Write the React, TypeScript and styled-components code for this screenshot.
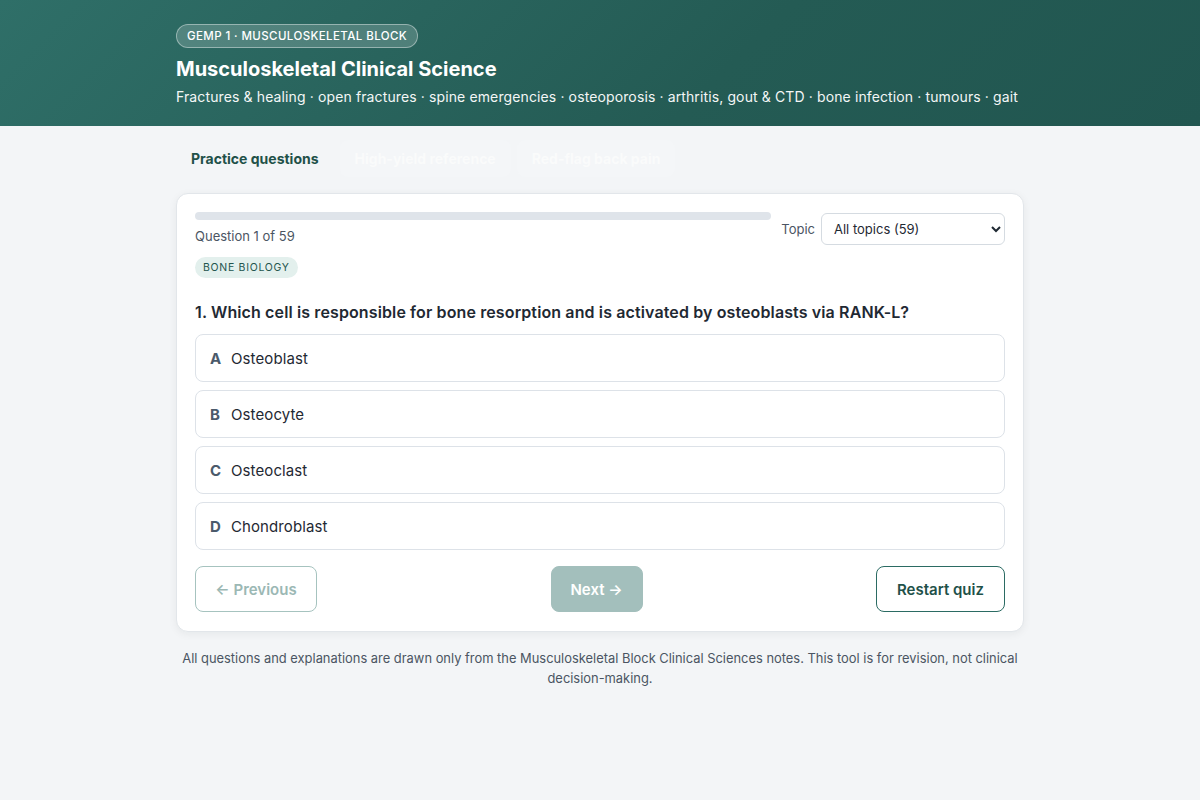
import React, { useState } from "react";
import styled, { createGlobalStyle } from "styled-components";

const questions = [
  {
    topic: "Bone biology",
    text: "Which cell is responsible for bone resorption and is activated by osteoblasts via RANK-L?",
    options: ["Osteoblast", "Osteocyte", "Osteoclast", "Chondroblast"],
  },
];

const tabs = ["Practice questions", "High-yield reference", "Red-flag back pain"];

const App = () => {
  const [tab, setTab] = useState(0);
  const [index] = useState(0);
  const q = questions[index];

  return (
    <>
      <GlobalStyle />
      <Header>
        <Inner>
          <Badge>GEMP 1 · Musculoskeletal Block</Badge>
          <Title>Musculoskeletal Clinical Science</Title>
          <Subtitle>
            Fractures &amp; healing · open fractures · spine emergencies · osteoporosis · arthritis, gout &amp; CTD · bone infection · tumours · gait
          </Subtitle>
        </Inner>
      </Header>
      <Main>
        <Tabs>
          {tabs.map((t, i) => (
            <Tab key={t} active={i === tab} onClick={() => setTab(i)}>{t}</Tab>
          ))}
        </Tabs>
        <Card>
          <TopRow>
            <ProgressCol>
              <Track>
                <Fill style={{ width: `${(index / 59) * 100}%` }} />
              </Track>
              <Counter>Question {index + 1} of 59</Counter>
            </ProgressCol>
            <TopicLabel>
              Topic
              <Select defaultValue="all">
                <option value="all">All topics (59)</option>
              </Select>
            </TopicLabel>
          </TopRow>
          <Tag>{q.topic}</Tag>
          <Question>{index + 1}. {q.text}</Question>
          <Options>
            {q.options.map((o, i) => (
              <Option key={o}>
                <Letter>{"ABCD"[i]}</Letter>
                {o}
              </Option>
            ))}
          </Options>
          <Actions>
            <GhostButton disabled>← Previous</GhostButton>
            <NextButton disabled>Next →</NextButton>
            <OutlineButton>Restart quiz</OutlineButton>
          </Actions>
        </Card>
        <Footnote>
          All questions and explanations are drawn only from the Musculoskeletal Block Clinical Sciences notes. This tool is for revision, not clinical decision-making.
        </Footnote>
      </Main>
    </>
  );
};

export default App;

const GlobalStyle = createGlobalStyle`
  body {
    margin: 0;
    background: #f3f5f7;
    font-family: Inter, "Liberation Sans", sans-serif;
    color: #1f2933;
  }
`;

const Header = styled.header`
  background: linear-gradient(135deg, #2f6f68 0%, #245b54 60%, #215650 100%);
  color: #fff;
  height: 126px;
  box-sizing: border-box;
  padding-top: 24px;
`;

const Inner = styled.div`
  width: 848px;
  margin: 0 auto;
`;

const Badge = styled.span`
  display: inline-block;
  font-size: 11.5px;
  font-weight: 500;
  letter-spacing: 0.4px;
  text-transform: uppercase;
  padding: 4px 10px;
  border-radius: 999px;
  background: rgba(255, 255, 255, 0.18);
  border: 1px solid rgba(255, 255, 255, 0.4);
`;

const Title = styled.h1`
  font-size: 20px;
  font-weight: 700;
  margin: 9px 0 0;
`;

const Subtitle = styled.p`
  font-size: 14px;
  letter-spacing: 0.12px;
  margin: 7px 0 0;
  opacity: 0.95;
`;

const Main = styled.main`
  width: 848px;
  margin: 0 auto;
  padding-top: 14px;
`;

const Tabs = styled.div`
  display: flex;
  gap: 6px;
  margin-bottom: 16px;
`;

const Tab = styled.button<{ active: boolean }>`
  border: none;
  background: ${(p) => (p.active ? "transparent" : "#f4f6f8")};
  color: ${(p) => (p.active ? "#1f5149" : "#fafbfb")};
  font: inherit;
  font-size: 14px;
  font-weight: 700;
  padding: 10px 15px;
  border-radius: 8px;
  cursor: pointer;
`;

const Card = styled.section`
  background: #fff;
  border: 1px solid #e2e6ea;
  border-radius: 12px;
  box-shadow: 0 2px 8px rgba(15, 30, 40, 0.06);
  padding: 18px 18px 19px;
`;

const TopRow = styled.div`
  display: flex;
  justify-content: space-between;
  align-items: flex-start;
  gap: 10px;
`;

const ProgressCol = styled.div`
  width: 576px;
`;

const Track = styled.div`
  height: 8px;
  background: #dfe4ea;
  border-radius: 999px;
  overflow: hidden;
`;

const Fill = styled.div`
  height: 100%;
  background: #2b6b63;
`;

const Counter = styled.div`
  font-size: 13px;
  color: #4b5563;
  margin-top: 8px;
`;

const TopicLabel = styled.label`
  display: flex;
  align-items: center;
  gap: 6px;
  margin-top: 1px;
  font-size: 13px;
  color: #4b5563;
`;

const Select = styled.select`
  width: 184px;
  height: 32px;
  font: inherit;
  font-size: 13px;
  color: #1f2933;
  padding: 0 8px;
  border: 1px solid #d5dbe1;
  border-radius: 6px;
  background: #fff;
`;

const Tag = styled.span`
  display: inline-block;
  margin-top: 12px;
  font-size: 10.5px;
  letter-spacing: 0.7px;
  text-transform: uppercase;
  color: #23554e;
  background: #e3f0ed;
  padding: 4px 8px;
  border-radius: 999px;
`;

const Question = styled.h2`
  font-size: 16px;
  font-weight: 600;
  letter-spacing: 0.12px;
  margin: 24px 0 12px;
  color: #1f2933;
`;

const Options = styled.div`
  display: flex;
  flex-direction: column;
  gap: 8px;
`;

const Option = styled.button`
  display: flex;
  align-items: center;
  height: 48px;
  padding: 0 14px;
  border: 1px solid #dde2e8;
  border-radius: 8px;
  background: #fff;
  font: inherit;
  font-size: 15px;
  letter-spacing: 0.1px;
  color: #1f2933;
  text-align: left;
  cursor: pointer;
`;

const Letter = styled.span`
  font-weight: 700;
  color: #4b5a6b;
  width: 21px;
`;

const Actions = styled.div`
  display: flex;
  justify-content: space-between;
  align-items: center;
  margin-top: 16px;
`;

const BaseButton = styled.button`
  height: 46px;
  border-radius: 8px;
  font: inherit;
  font-size: 15px;
  font-weight: 600;
  padding: 0 18px;
  cursor: pointer;
  &:disabled {
    cursor: default;
  }
`;

const GhostButton = styled(BaseButton)`
  width: 122px;
  background: #fff;
  border: 1px solid #a6c3bf;
  color: #9bb8b4;
`;

const NextButton = styled(BaseButton)`
  width: 92px;
  background: #a3bfbc;
  border: 1px solid #a3bfbc;
  color: #fff;
`;

const OutlineButton = styled(BaseButton)`
  width: 129px;
  background: #fff;
  border: 1px solid #2b6b63;
  color: #1f5149;
`;

const Footnote = styled.p`
  text-align: center;
  font-size: 12.9px;
  line-height: 20px;
  color: #4b5563;
  margin: 17px 0 0;
`;
